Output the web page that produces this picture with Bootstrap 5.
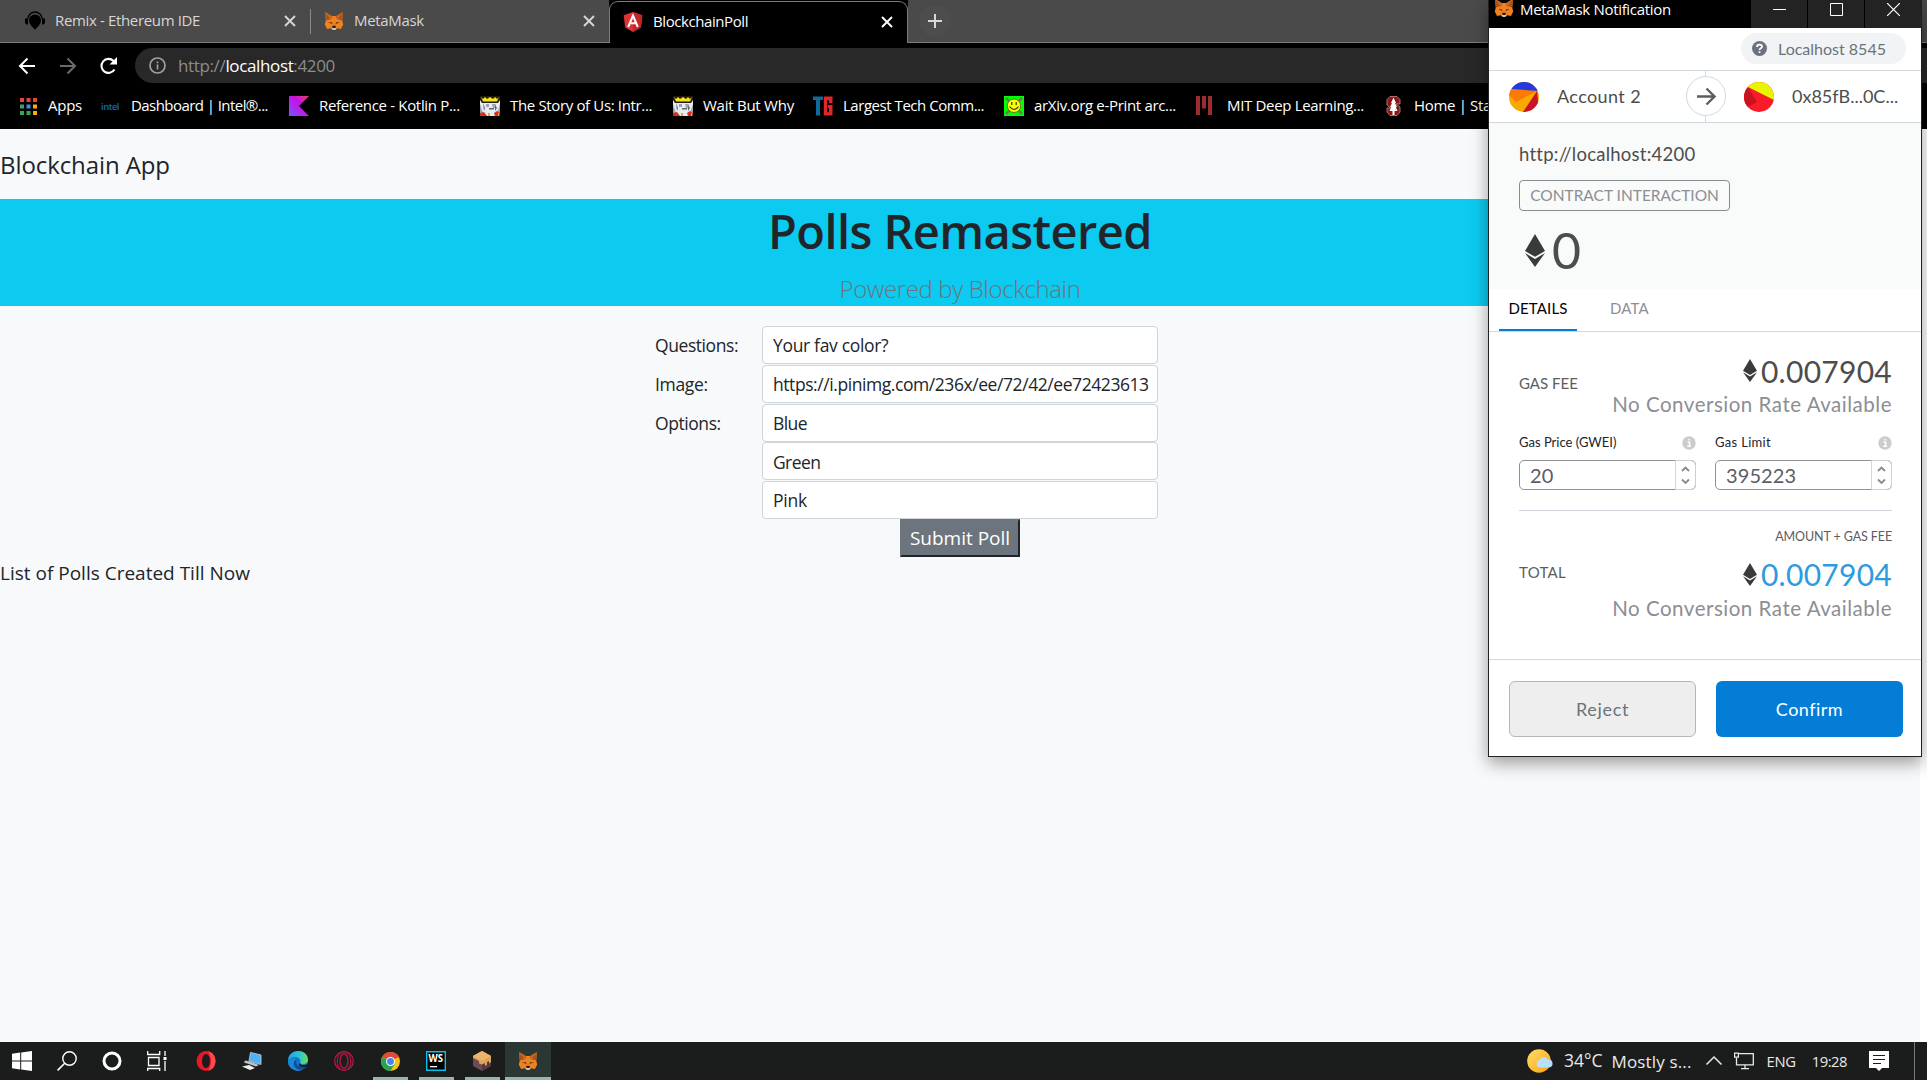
<!DOCTYPE html>
<html lang="en">
<head>
<meta charset="utf-8">
<title>BlockchainPoll</title>
<meta name="viewport" content="width=device-width, initial-scale=1">
<link href="https://cdn.jsdelivr.net/npm/bootstrap@5.3.0/dist/css/bootstrap.min.css" rel="stylesheet">
<style>
  body { font-family: "Open Sans", "Noto Sans", sans-serif; background: #fff; color: #212529; }
  svg { display: block; flex: none; }
  .desktop { width: 1927px; height: 1080px; overflow: hidden; }
  .line-1 { line-height: 1; white-space: nowrap; }

  /* Browser chrome */
  .tab-strip { height: 43px; background: #4a4a4a; color: #d6d6d6; font-size: 15px; box-shadow: inset 0 -1px #7b7d7c; }
  .br-tab { height: 43px; padding: 0 14px 2px; }
  .br-tab .tab-label { margin-left: 10px; padding-bottom: 1px; }
  .tab-first { width: 310px; padding-left: 25px; }
  .tab-second { width: 298px; padding-left: 13px; }
  .tab-active { width: 299px; height: 42px; margin-top: 1px; background: #000; color: #fff; border: 1px solid #7b7d7c; border-bottom: 0; border-radius: 9px 9px 0 0; padding-left: 13px; padding-bottom: 2px; }
  .tab-active-wrap { background: #000; box-shadow: none; }
  .tab-sep { width: 1px; height: 25px; background: #8b8b8b; margin-top: 9px; }
  .tab-add { width: 32px; height: 32px; border-radius: 50%; background: #4d4d4d; margin: 5px 0 0 11px; }
  .tool-bar { height: 41px; background: #000; padding: 5px 0 1px 18px; }
  .omni { height: 35px; background: #282828; border-radius: 18px 0 0 18px; color: #8d8d8d; font-size: 17px; padding-left: 14px; margin-left: 16px; }
  .omni .host { color: #fff; }
  .mark-bar { height: 45px; background: #000; color: #fff; font-size: 15px; padding: 0 0 1px 20px; }
  .mark-bar .line-1 { padding-bottom: 2px; }
  .bm { flex: none; gap: 10px; }

  /* Poll page */
  .poll-page { height: 913px; width: 1920px; background: #f8f9fa; }
  .app-brand { height: 70px; font-size: 24px; padding-top: 24px; }
  .hero { height: 107px; background: #0dcaf0; }
  .hero h1 { font-size: 47px; font-weight: 600; padding-top: 9px; margin: 0; }
  .hero .tagline { font-size: 24px; font-weight: 300; color: #6c757d; padding-top: 22px; }
  .poll-form { width: 503px; margin: 20px 0 0 655px; font-size: 17.5px; }
  .poll-row { height: 38.75px; }
  .poll-row label { width: 107px; padding-top: 11px; }
  .poll-row .form-control { width: 396px; height: 38px; font-size: 17.5px; padding: 2px 10px 0; border: 1px solid #ced4da; border-radius: 4px; color: #212529; font-family: inherit; }
  .submit-poll { width: 120px; height: 38px; background: #6c757d; color: #fff; font-size: 19px; line-height: 1; border: 2px solid; border-color: #6c757d #212529 #212529 #6c757d; padding: 2px 0 0; margin-left: 245px; margin-top: -1px; }
  .poll-list { font-size: 19px; margin-top: 7px; }

  /* Wallet popup */
  .wallet { position: absolute; left: 1488px; top: 0; width: 434px; height: 757px; background: #fff; border: 1px solid #222; border-top: 0; box-shadow: 0 6px 16px rgba(0,0,0,.38); font-family: Lato, sans-serif; color: #4d4d4d; }
  .w-title { height: 28px; background: #000; color: #fff; font-family: "Open Sans", sans-serif; font-size: 15px; }
  .w-title .fox { margin: -2px 0 0 5px; }
  .w-title .cap-text { margin: 2px 0 0 6px; }
  .w-btn { width: 56px; height: 28px; background: #232323; margin-left: 1px; padding-bottom: 9px; }
  .w-net { height: 43px; border-bottom: 1px solid #d2d8dd; padding-right: 15px; }
  .net-pill { width: 165px; height: 31px; border-radius: 16px; background: #f2f3f4; color: #6a737d; font-size: 16px; padding-left: 11px; gap: 11px; margin-bottom: 1px; }
  .w-accounts { height: 52px; border-bottom: 1px solid #d2d8dd; font-size: 18px; position: relative; }
  .w-accounts .line-1 { padding-bottom: 2px; }
  .w-half { width: 216px; padding-left: 20px; gap: 18px; }
  .w-half + .w-half { border-left: 1px solid #d2d8dd; padding-left: 38px; }
  .w-arrow { position: absolute; left: 197px; top: 5px; width: 40px; height: 40px; border: 1px solid #d2d8dd; border-radius: 50%; background: #fff; }
  .w-summary { height: 166px; background: #f9fafa; padding: 21px 30px 0; }
  .w-origin { font-size: 18.5px; line-height: 20px; }
  .w-kind { width: 211px; height: 31px; border: 1px solid #888a91; border-radius: 4px; color: #8c8e94; font-size: 15.5px; margin-top: 16px; }
  .w-value { font-size: 50px; color: #4d4d4d; margin-top: 14px; padding-left: 6px; gap: 7px; height: 50px; }
  .w-tabs { height: 43px; border-bottom: 1px solid #d2d8dd; padding: 0 10px; font-size: 15px; }
  .w-tab { height: 42px; padding: 0 10px 4px; color: #8c8e94; }
  .w-tab.on { color: #000; border-bottom: 2px solid #037dd6; width: 78px; padding-bottom: 2px; margin-right: 23px; }
  .w-body { padding: 0 29px 0 30px; height: 328px; flex: none; border-bottom: 1px solid #d2d8dd; }
  .w-fee { height: 102px; }
  .w-fee > div { padding-top: 6px; }
  .w-caplabel { font-size: 15px; color: #5d5d5d; }
  .w-amount { font-size: 30px; gap: 4px; color: #4d4d4d; height: 30px; }
  .w-noconv { font-size: 20.5px; color: #8c8e94; height: 24px; margin-top: 7px; }
  .w-fields { gap: 19px; }
  .w-field { width: 177px; font-size: 13px; color: #22232c; }
  .w-field-head { height: 17px; }
  .w-number { height: 30px; margin-top: 9px; border: 1px solid #8f9194; border-radius: 5px; color: #5b5d67; font-size: 20px; padding-left: 10px; }
  .w-spin { width: 21px; height: 30px; margin: -1px; border: 1px solid #cfcfcf; border-left-color: #d8d8d8; border-radius: 0 5px 5px 0; gap: 6px; }
  .w-total { margin-top: 20px; border-top: 1px solid #d2d4dc; padding-top: 18px; }
  .w-hint { font-size: 12.5px; color: #5d5d5d; height: 16px; }
  .w-total .w-amount { color: #2f9ae0; margin-top: 14px; }
  .w-actions { padding: 21px 18px 0 20px; gap: 20px; }
  .w-actions .btn { width: 187px; height: 56px; border-radius: 6px; font-size: 18px; padding: 0; }
  .w-reject { background: #eee; border: 1px solid #b4b6b8; color: #6a737d; }
  .w-confirm { background: #037dd6; color: #fff; border: 0; }

  /* Taskbar */
  .task-bar { height: 38px; background: #1b1d1c; color: #e9e9e9; font-size: 14.8px; }
  .tk { width: 46px; height: 38px; }
  .tk-sys { width: 45px; padding-right: 1px; }
  .tk.open { background: linear-gradient(#97b5aa, #97b5aa) center bottom / 35px 3px no-repeat; }
  .tk.front { background: linear-gradient(#97b5aa, #97b5aa) center bottom / 46px 3px no-repeat #2b3735; }
  .tray { padding-right: 12px; }
  .tray-end { border-left: 1px solid #777; height: 38px; margin-left: 25px; }

  /* Tracking per text */
  .t-remix, .t-b4 { letter-spacing: -.35px; }
  .t-mm, .t-b3, .t-b7, .t-title { letter-spacing: -.32px; }
  .t-bp { letter-spacing: -.42px; }
  .t-url { letter-spacing: -.36px; }
  .t-b1, .t-b5 { letter-spacing: -.25px; }
  .t-b2 { letter-spacing: -.56px; }
  .t-b6 { letter-spacing: -.46px; }
  .t-b8, .t-b9 { letter-spacing: -.33px; }
  .t-brand { letter-spacing: -.09px; }
  .t-h1 { letter-spacing: -.58px; }
  .t-tag { letter-spacing: -.37px; }
  .t-l1, .t-l3, .t-i2 { letter-spacing: -.43px; }
  .t-i1, .t-l2 { letter-spacing: -.33px; }
  .t-i3, .t-i4 { letter-spacing: -.6px; }
  .t-i5 { letter-spacing: -.22px; }
  .t-most { letter-spacing: .14px; }
  .t-eng { letter-spacing: -.3px; }
  .t-time { letter-spacing: -.5px; }
  .t-acc { letter-spacing: .39px; }
  .t-orig { letter-spacing: .25px; }
  .t-kind { letter-spacing: 0; }
  .t-det { letter-spacing: .13px; }
  .t-data { letter-spacing: .2px; }
  .t-am { letter-spacing: .27px; }
  .t-nc { letter-spacing: .52px; }
  .t-n1, .t-n2 { letter-spacing: .1px; }
  .t-gl { letter-spacing: .32px; }
  .t-hint { letter-spacing: -.1px; }
  .t-tot { letter-spacing: .28px; }
  .t-rej { letter-spacing: .65px; }
  .t-con { letter-spacing: .48px; }
</style>
<script src="https://cdn.jsdelivr.net/npm/bootstrap@5.3.0/dist/js/bootstrap.bundle.min.js"></script>
</head>
<body>
<svg width="0" height="0" class="position-absolute">
  <defs>
    <symbol id="fox" viewBox="0 0 20 20">
      <path d="M1 1 8 5h4l7-4-.8 8.500 1 4L17 18l-4-.8-1.500 1.500h-3L7 17.200 3 18 .8 13.500l1-4z" fill="#f0811f"/>
      <path d="M1 1 8 5 7 8 1.800 9.500zM19 1l-7 4 1 3 5.200 1.500z" fill="#a4551f"/>
      <path d="M1 1 8.300 6.500 7 9zM19 1l-7.300 5.500L13 9z" fill="#d06a20"/>
      <path d="m4 11 4 .2.500 2zM16 11l-4 .2-.5 2z" fill="#543b2c"/>
      <path d="m8 16 .6-1.200h2.800L12 16l-.8 1H8.800z" fill="#2c1c17"/>
      <path d="M7.300 17 8.800 17h2.400l1.500 0-1.500 2H8.800z" fill="#cfc4bb"/>
    </symbol>
    <symbol id="eth" viewBox="0 0 20 33">
      <path d="M10 0 20 17 10 22.800 0 17z" fill="#393a3c"/>
      <path d="M0 19 10 25l10-6-10 14z" fill="#393a3c"/>
    </symbol>
    <symbol id="cross" viewBox="0 0 12 12"><path d="M1 1l10 10M11 1 1 11" stroke="currentColor" stroke-width="1.900"/></symbol>
    <symbol id="king" viewBox="0 0 20 20">
      <path fill="#e9edf2" d="M0 0h20v20H0z"/>
      <path fill="#9aa5b3" d="M0 8 4 20H0zM20 8l-4 12h4zM6 8h3v3H6zM12 8h4l-1 4h-2z"/>
      <path fill="#5c6773" d="M9 12h5v1.500H9zM3 7l2 5-1 3zM15 9l2 3-2 3z"/>
      <path fill="#201c08" d="M0 0h20v4l-2 3H2L0 4z"/>
      <path fill="#f5e21a" d="M1 1l2 2 2-2 2 2 3-2 3 2 2-2 2 2 2-2-2 4.500H3z"/>
      <path fill="#d8301c" d="M0 17l4-1 3 4H0zM14 17l3-2 3 2v3h-5z"/>
      <path fill="#f0a31a" d="M8 17h2v3H8zM18 17h1v3h-1z"/>
    </symbol>
    <symbol id="info" viewBox="0 0 14 14"><circle cx="7" cy="7" r="6.700" fill="#ccc"/><path d="M5.600 6.200h2v4M5.300 10.300h3.600M6.200 3.800h1.600" stroke="#fff" stroke-width="1.500" fill="none"/></symbol>
    <symbol id="updown" viewBox="0 0 9 20"><path d="M1 6l3.500-3.500L8 6M1 14.500 4.500 18 8 14.500" stroke="#8b8b8b" stroke-width="1.900" fill="none"/></symbol>
  </defs>
</svg>

<div class="desktop position-relative d-flex flex-column">
  <!-- Tabs -->
  <div class="tab-strip d-flex align-items-start">
    <div class="br-tab tab-first d-flex align-items-center">
      <svg width="20" height="20" viewBox="0 0 20 20"><path d="M3 8a7 7 0 0 1 14 0" fill="none" stroke="#000" stroke-width="1.400"/><circle cx="10" cy="9.500" r="6" fill="#000"/><path d="M0 7.500h3v6H1.500L0 12zM20 7.500h-3v6h1.500L20 12zM5.500 14l4.500 4.800 4.500-4.800z" fill="#000"/></svg>
      <span class="tab-label line-1 t-remix">Remix - Ethereum IDE</span>
      <svg class="ms-auto" width="12" height="12"><use href="#cross"/></svg>
    </div>
    <div class="tab-sep"></div>
    <div class="br-tab tab-second d-flex align-items-center">
      <svg width="20" height="20"><use href="#fox"/></svg>
      <span class="tab-label line-1 t-mm">MetaMask</span>
      <svg class="ms-auto" width="12" height="12"><use href="#cross"/></svg>
    </div>
    <div class="tab-active-wrap"><div class="br-tab tab-active d-flex align-items-center">
      <svg width="20" height="20" viewBox="0 0 20 20"><path d="M10 0l9.300 3.300-1.400 12.200L10 20l-7.900-4.500L.7 3.300z" fill="#dd3236"/><path d="M10 0l9.300 3.300-1.400 12.200L10 20z" fill="#c1272d"/><path d="M5.200 15 10 3.500 14.800 15M7 11.300h6" fill="none" stroke="#fff" stroke-width="2"/></svg>
      <span class="tab-label line-1 t-bp">BlockchainPoll</span>
      <svg class="ms-auto" width="12" height="12"><use href="#cross"/></svg>
    </div></div>
    <div class="tab-add d-flex align-items-center justify-content-center"><svg width="14" height="14" viewBox="0 0 14 14"><path d="M7 0v14M0 7h14" stroke="#d6d6d6" stroke-width="2"/></svg></div>
  </div>

  <!-- Address bar -->
  <div class="tool-bar d-flex align-items-center">
    <svg width="18" height="18" viewBox="0 0 18 18"><path d="M17 9H2M9.500 1.500 2 9l7.500 7.500" fill="none" stroke="#fff" stroke-width="2"/></svg>
    <svg class="ms-4" width="18" height="18" viewBox="0 0 18 18"><path d="M0 9h15M7.500 1.500 15 9l-7.500 7.500" fill="none" stroke="#6b6b6b" stroke-width="2"/></svg>
    <svg style="margin-left:21px" width="20" height="18" viewBox="0 0 20 18"><path d="M15.500 12.500A7 7 0 1 1 14.500 4l1.500 1.500" fill="none" stroke="#fff" stroke-width="2.100"/><path d="M18 0v7.500h-7.500z" fill="#fff"/></svg>
    <div class="omni d-flex align-items-center flex-fill">
      <svg width="17" height="17" viewBox="0 0 17 17"><circle cx="8.500" cy="8.500" r="7.500" fill="none" stroke="#9aa0a6" stroke-width="1.700"/><path d="M8.500 7.500v5M8.500 4.500v1.800" stroke="#9aa0a6" stroke-width="1.700"/></svg>
      <span class="line-1 ms-2 ps-1 t-url">http://<span class="host">localhost</span>:4200</span>
    </div>
  </div>

  <!-- Bookmarks -->
  <div class="mark-bar d-flex align-items-center">
    <div class="bm d-flex align-items-center" style="width:81px;gap:11px">
      <svg width="17" height="17" viewBox="0 0 17 17"><path fill="#ea4335" d="M0 0h4v4H0zM6.500 0h4v4h-4zM13 0h4v4h-4z"/><path fill="#34a853" d="M0 6.500h4v4H0zM0 13h4v4H0zM6.500 13h4v4h-4z"/><path fill="#4285f4" d="M6.500 6.500h4v4h-4z"/><path fill="#fbab05" d="M13 6.500h4v4h-4zM13 13h4v4h-4z"/></svg>
      <span class="line-1 t-b1">Apps</span></div>
    <div class="bm d-flex align-items-center" style="width:188px">
      <svg width="20" height="20" viewBox="0 0 20 20"><text x="0" y="14" font-size="9.500" font-weight="600" fill="#0b6bb5" textLength="18.500">intel</text></svg>
      <span class="line-1 t-b2">Dashboard | Intel®...</span></div>
    <div class="bm d-flex align-items-center" style="width:191px">
      <svg width="20" height="20" viewBox="0 0 20 20"><defs><linearGradient id="kt" x1="1" y1="0" x2="0" y2="1"><stop offset="0" stop-color="#e44857"/><stop offset=".4" stop-color="#c711e1"/><stop offset="1" stop-color="#7f52ff"/></linearGradient></defs><path d="M0 0h20L10 10l10 10H0z" fill="url(#kt)"/></svg>
      <span class="line-1 t-b3">Reference - Kotlin P...</span></div>
    <div class="bm d-flex align-items-center" style="width:193px"><svg width="20" height="20"><use href="#king"/></svg><span class="line-1 t-b4">The Story of Us: Intr...</span></div>
    <div class="bm d-flex align-items-center" style="width:140px"><svg width="20" height="20"><use href="#king"/></svg><span class="line-1 t-b5">Wait But Why</span></div>
    <div class="bm d-flex align-items-center" style="width:191px">
      <svg width="20" height="20" viewBox="0 0 20 20"><path d="M0 .5h10v3.500H7V19.500H3V4H0z" fill="#12699c"/><path d="M19.500 7h-3.500V4.200h-1.800v12H16V12h-1V9h4.500v10.500h-8.700V.5h8.700z" fill="#e3242b"/></svg>
      <span class="line-1 t-b6">Largest Tech Comm...</span></div>
    <div class="bm d-flex align-items-center" style="width:189px">
      <svg width="20" height="20" viewBox="0 0 20 20"><path fill="#0f0" d="M0 0h20v20H0z"/><path d="M2 2l16 16M18 2 2 18" stroke="#6d7a5b" stroke-width="2.500"/><circle cx="10" cy="9.800" r="6.700" fill="#ff0" stroke="#555a10" stroke-width=".8"/><path d="M7.800 6v3M12.200 6v3M5.500 10.500q4.500 6 9 0" fill="none" stroke="#33330a" stroke-width="1.200"/></svg>
      <span class="line-1 t-b7">arXiv.org e-Print arc...</span></div>
    <div class="bm d-flex align-items-center" style="width:190px;gap:12px">
      <svg width="22" height="20" viewBox="0 0 22 20"><path d="M3 0h4v19H3zM9 0h4v12.500H9zM15 0h4v19h-4z" fill="#9b2d31"/></svg>
      <span class="line-1 t-b8">MIT Deep Learning...</span></div>
    <div class="bm d-flex align-items-center">
      <svg width="21" height="20" viewBox="0 0 21 20"><path d="M7 .5h7l3 3V8h-4l4 3v5l-3 3.500H7L4 16v-4h3.500L4 9V3.500z" fill="#8c1515" stroke="#c98a8a" stroke-width=".8"/><path d="M10.500 1.500 13 7l-1 .2 2 3.800-1.200.2L14.500 15h-3v4h-2v-4h-3L8.200 11.200 7 11l2-3.800L8 7z" fill="#fff"/></svg>
      <span class="line-1 t-b9">Home | Stanford</span></div>
  </div>

  <!-- Poll page -->
  <main class="poll-page">
    <div class="app-brand line-1"><span class="t-brand">Blockchain App</span></div>
    <div class="hero d-flex flex-column align-items-center">
      <h1 class="line-1 t-h1">Polls Remastered</h1>
      <div class="tagline line-1 t-tag">Powered by Blockchain</div>
    </div>
    <form class="poll-form">
      <div class="poll-row d-flex align-items-start"><label class="line-1"><span class="t-l1">Questions:</span></label><div class="form-control d-flex align-items-center"><span class="line-1 t-i1">Your fav color?</span></div></div>
      <div class="poll-row d-flex align-items-start"><label class="line-1"><span class="t-l2">Image:</span></label><div class="form-control d-flex align-items-center"><span class="line-1 t-i2">https://i.pinimg.com/236x/ee/72/42/ee72423613</span></div></div>
      <div class="poll-row d-flex align-items-start"><label class="line-1"><span class="t-l3">Options:</span></label><div class="form-control d-flex align-items-center"><span class="line-1 t-i3">Blue</span></div></div>
      <div class="poll-row d-flex justify-content-end"><div class="form-control d-flex align-items-center"><span class="line-1 t-i4">Green</span></div></div>
      <div class="poll-row d-flex justify-content-end"><div class="form-control d-flex align-items-center"><span class="line-1 t-i5">Pink</span></div></div>
      <button type="button" class="submit-poll">Submit Poll</button>
    </form>
    <div class="poll-list line-1">List of Polls Created Till Now</div>
  </main>

  <!-- Taskbar -->
  <div class="task-bar d-flex align-items-center">
    <div class="tk tk-sys d-flex align-items-center justify-content-center"><svg width="20" height="20" viewBox="0 0 20 20"><path d="M0 2.700 8.200 1.500v8H0zM9.200 1.400 20 0v9.500H9.200zM0 10.500h8.200v8L0 17.300zM9.200 10.500H20V20L9.200 18.600z" fill="#fff"/></svg></div>
    <div class="tk tk-sys d-flex align-items-center justify-content-center"><svg width="20" height="20" viewBox="0 0 20 20"><circle cx="12.500" cy="7.500" r="6.700" fill="none" stroke="#fff" stroke-width="1.400"/><path d="M7.700 12.300.6 19.400" stroke="#fff" stroke-width="1.600"/></svg></div>
    <div class="tk tk-sys d-flex align-items-center justify-content-center"><svg width="20" height="20" viewBox="0 0 20 20"><circle cx="10" cy="10" r="8" fill="none" stroke="#fff" stroke-width="3"/></svg></div>
    <div class="tk tk-sys d-flex align-items-center justify-content-center"><svg width="20" height="20" viewBox="0 0 20 20"><path d="M.7 0v3.500h12V0M1.500 6.500h10.500v8H1.500zM.7 20v-2.500h12V20M18 0v5M18 10v10" fill="none" stroke="#fff" stroke-width="1.300"/><path d="M16.500 6h3v3h-3z" fill="#fff"/></svg></div>
    <div class="tk d-flex align-items-center justify-content-center" style="margin-left:3px"><svg width="20" height="20" viewBox="0 0 20 20"><ellipse cx="10" cy="10" rx="9.500" ry="10" fill="#e8182c"/><path d="M12 .3c10 1.500 10 18 0 19.400 4-4 4-15 0-19.400z" fill="#ff4b4b"/><ellipse cx="10" cy="10" rx="4" ry="7" fill="#1b1d1c"/></svg></div>
    <div class="tk d-flex align-items-center justify-content-center"><svg width="22" height="20" viewBox="0 0 22 20"><path d="M9.500 1.500 20 4v9.500L8 10z" fill="#4fb2f5" stroke="#b9c7d2" stroke-width=".9"/><path d="m4 9.500 5 1 9 3.500-3 1.500-12-4z" fill="#b7c2c9"/><path d="m1 15.500 7-1.500 6 3-5 2z" fill="#eceff0"/></svg></div>
    <div class="tk d-flex align-items-center justify-content-center"><svg width="20" height="20" viewBox="0 0 20 20"><defs><linearGradient id="eg" x1="0" x2="1"><stop offset="0" stop-color="#1fa5e6"/><stop offset=".6" stop-color="#2fc6cf"/><stop offset="1" stop-color="#6be04e"/></linearGradient></defs><circle cx="10" cy="10" r="10" fill="#1473cc"/><path d="M0 9C1-3 20-3 20 9c0 4-6 5-8.500 3.500C14 9 11 6 7 6S1 8 0 9z" fill="url(#eg)"/><path d="M8 8c-5 4-1 11 5 11.500C8 21-1 17 0 9.500 1 6.500 6 6 8 8z" fill="#1c86d8"/><path d="M9 8.500c-3 4 2 9.500 8.500 7.500-3 4-9 3-11-.5-1.500-3 0-6 2.500-7z" fill="#0c4d95"/><path d="M12 11.500c.5 3 4 3.500 8 1l-1 3c-4 1.500-8 .5-8-2z" fill="#1b1d1c"/></svg></div>
    <div class="tk d-flex align-items-center justify-content-center"><svg width="20" height="20" viewBox="0 0 20 20"><circle cx="10" cy="10" r="9.300" fill="none" stroke="#c9164a" stroke-width="1.200"/><ellipse cx="10" cy="10" rx="4" ry="7.300" fill="none" stroke="#c9164a" stroke-width="1.200"/><path d="M7 1.500C2 5 2 15 7 18.500M13 1.500c5 3.500 5 13.500 0 17" fill="none" stroke="#c9164a"/></svg></div>
    <div class="tk open d-flex align-items-center justify-content-center"><svg width="19" height="19" viewBox="0 0 20 20"><circle cx="10" cy="10" r="10" fill="#fbc116"/><path d="M10 10 1.340 5A10 10 0 0 1 18.660 5z" fill="#e04a3a"/><path d="M1.340 5A10 10 0 0 0 10 20l4.300-7.500L10 10z" fill="#2ba24c"/><path d="M10 5h8.660" stroke="#e04a3a" stroke-width="2"/><circle cx="10" cy="10" r="4.700" fill="#fff"/><circle cx="10" cy="10" r="3.600" fill="#4285f4"/></svg></div>
    <div class="tk open d-flex align-items-center justify-content-center"><svg width="20" height="20" viewBox="0 0 20 20"><path d="M.7.700h18.600v18.600H.7z" fill="#000" stroke="#09bfee" stroke-width="1.400"/><text x="2.600" y="10.800" font-size="10" font-weight="700" fill="#fff" textLength="14.500" lengthAdjust="spacingAndGlyphs">WS</text><path d="M4 15h7v1.300H4z" fill="#fff"/></svg></div>
    <div class="tk open d-flex align-items-center justify-content-center"><svg width="20" height="20" viewBox="0 0 20 20"><path d="m10 0 9 5v10l-9 5-9-5V5z" fill="#6d4a50"/><path d="M10 10v10l9-5V5z" fill="#57393f"/><path d="m10 0 9 5v6l-2 1.500V10l-2 1v3l-2 .8V12l-3 1.500-3-1V10L1 7V5z" fill="#e0a35c"/><path d="m10 0 9 5-9 5-9-5z" fill="#edb46e"/></svg></div>
    <div class="tk front d-flex align-items-center justify-content-center"><svg width="20" height="20"><use href="#fox"/></svg></div>
    <div class="tray ms-auto d-flex align-items-center">
      <svg width="26" height="24" viewBox="0 0 26 24"><defs><linearGradient id="sun" x1="0" y1="0" x2="1" y2="1"><stop offset="0" stop-color="#ffdf6b"/><stop offset="1" stop-color="#ffa010"/></linearGradient></defs><circle cx="12" cy="12" r="11.800" fill="url(#sun)"/><path d="M13 18.500a3.800 3.800 0 0 1-.3-7.500 4.500 4.500 0 0 1 8.300-.500 4 4 0 0 1 1 8z" fill="#b9e0fb"/></svg>
      <span class="line-1 t-temp" style="margin-left:11px;font-size:17.500px">34°C</span>
      <span class="line-1 t-most" style="margin-left:9px;font-size:17px">Mostly s...</span>
      <svg style="margin-left:13px" width="18" height="12" viewBox="0 0 18 12"><path d="M1.500 9.500 9 2l7.500 7.500" fill="none" stroke="#e9e9e9" stroke-width="1.500"/></svg>
      <svg style="margin-left:11px" width="20" height="18" viewBox="0 0 20 18"><path d="M5 1.700h14.300v11.200H2.500V6M11 13v3.500M7 16.700h8" fill="none" stroke="#e9e9e9" stroke-width="1.300"/><path d="M.6 1.200h3.800v4H.6z" fill="none" stroke="#e9e9e9" stroke-width="1.200"/></svg>
      <span class="line-1 t-eng" style="margin-left:13px">ENG</span>
      <span class="line-1 t-time" style="margin-left:16px">19:28</span>
      <svg style="margin-left:22px" width="20" height="20" viewBox="0 0 20 20"><path d="M0 0h20v17h-7l-3 3-3-3H0z" fill="#fff"/><path d="M4 4.500h12M4 8.500h12M4 12.500h8" stroke="#1b1d1c" stroke-width="1.200"/></svg>
      <div class="tray-end"></div>
    </div>
  </div>

  <!-- Wallet notification window -->
  <section class="wallet d-flex flex-column">
    <div class="w-title d-flex">
      <svg class="fox" width="20" height="20"><use href="#fox"/></svg>
      <span class="cap-text line-1 t-title">MetaMask Notification</span>
      <div class="w-btn ms-auto d-flex align-items-center justify-content-center"><svg width="13" height="13"><path d="M0 6.500h13" stroke="#fff"/></svg></div>
      <div class="w-btn d-flex align-items-center justify-content-center"><svg width="13" height="13"><path d="M.5.500h12v12H.5z" stroke="#fff" fill="none"/></svg></div>
      <div class="w-btn d-flex align-items-center justify-content-center"><svg width="13" height="13"><path d="M0 0l13 13M13 0 0 13" stroke="#fff" stroke-width="1.200"/></svg></div>
    </div>
    <div class="w-net d-flex align-items-center justify-content-end">
      <div class="net-pill d-flex align-items-center"><svg width="15" height="15" viewBox="0 0 15 15"><circle cx="7.500" cy="7.500" r="7.500" fill="#6a737d"/><path d="M5 6c0-3.300 5-3 5-.300C10 7.500 7.500 7 7.500 9M7.500 10.200v1.900" fill="none" stroke="#fff" stroke-width="1.800"/></svg><span class="line-1">Localhost 8545</span></div>
    </div>
    <div class="w-accounts d-flex">
      <div class="w-half d-flex align-items-center">
        <svg width="30" height="30" viewBox="0 0 30 30"><defs><clipPath id="cr"><circle cx="15" cy="15" r="15"/></clipPath></defs><g clip-path="url(#cr)"><path fill="#faa900" d="M0 0h30v30H0z"/><path fill="#fb7a04" d="M0 5 28 9 7 20 0 13z"/><path fill="#233ae0" d="M0 0h30v9L3 7z"/><path fill="#c81426" d="M28 9 14 30h16z"/></g></svg>
        <span class="line-1 t-acc">Account 2</span></div>
      <div class="w-half d-flex align-items-center">
        <svg width="30" height="30" viewBox="0 0 30 30"><g clip-path="url(#cr)"><path fill="#fb1a27" d="M0 0h30v30H0z"/><path fill="#e9f500" d="M0 0h30v18L4 5z"/><path fill="#c81420" d="M4 5 13 20 0 27V8z"/></g></svg>
        <span class="line-1 t-addr">0x85fB...0C...</span></div>
      <div class="w-arrow d-flex align-items-center justify-content-center"><svg width="19" height="19" viewBox="0 0 19 19"><path d="M0 9.500h17M9.500 1.500l8 8-8 8" fill="none" stroke="#5b5d5f" stroke-width="2.300"/></svg></div>
    </div>
    <div class="w-summary">
      <div class="w-origin"><span class="t-orig">http://localhost:4200</span></div>
      <div class="w-kind d-flex align-items-center justify-content-center"><span class="line-1 t-kind">CONTRACT INTERACTION</span></div>
      <div class="w-value d-flex align-items-center"><svg width="20" height="33"><use href="#eth"/></svg><span class="line-1">0</span></div>
    </div>
    <div class="w-tabs d-flex">
      <div class="w-tab on d-flex align-items-center justify-content-center"><span class="line-1 t-det">DETAILS</span></div>
      <div class="w-tab d-flex align-items-center"><span class="line-1 t-data">DATA</span></div>
    </div>
    <div class="w-body">
      <div class="w-fee d-flex align-items-center justify-content-between">
        <span class="w-caplabel line-1">GAS FEE</span>
        <div class="d-flex flex-column align-items-end">
          <div class="w-amount d-flex align-items-center"><svg width="14" height="23"><use href="#eth"/></svg><span class="line-1 t-am">0.007904</span></div>
          <div class="w-noconv d-flex align-items-center"><span class="line-1 t-nc">No Conversion Rate Available</span></div>
        </div>
      </div>
      <div class="w-fields d-flex">
        <div class="w-field"><div class="w-field-head d-flex align-items-center justify-content-between"><span class="line-1">Gas Price (GWEI)</span><svg width="14" height="14"><use href="#info"/></svg></div>
          <div class="w-number d-flex align-items-center justify-content-between"><span class="line-1 t-n1">20</span><div class="w-spin d-flex align-items-center justify-content-center"><svg width="9" height="20"><use href="#updown"/></svg></div></div></div>
        <div class="w-field"><div class="w-field-head d-flex align-items-center justify-content-between"><span class="line-1 t-gl">Gas Limit</span><svg width="14" height="14"><use href="#info"/></svg></div>
          <div class="w-number d-flex align-items-center justify-content-between"><span class="line-1 t-n2">395223</span><div class="w-spin d-flex align-items-center justify-content-center"><svg width="9" height="20"><use href="#updown"/></svg></div></div></div>
      </div>
      <div class="w-total">
        <div class="w-hint d-flex align-items-center justify-content-end"><span class="line-1 t-hint">AMOUNT + GAS FEE</span></div>
        <div class="d-flex justify-content-between">
          <span class="w-caplabel line-1 pt-3 mt-1"><span class="t-tot">TOTAL</span></span>
          <div class="d-flex flex-column align-items-end">
            <div class="w-amount d-flex align-items-center"><svg width="14" height="23"><use href="#eth"/></svg><span class="line-1 t-am">0.007904</span></div>
            <div class="w-noconv d-flex align-items-center"><span class="line-1 t-nc">No Conversion Rate Available</span></div>
          </div>
        </div>
      </div>
    </div>
    <div class="w-actions d-flex">
      <button type="button" class="btn w-reject"><span class="t-rej">Reject</span></button>
      <button type="button" class="btn w-confirm"><span class="t-con">Confirm</span></button>
    </div>
  </section>
</div>
</body>
</html>
